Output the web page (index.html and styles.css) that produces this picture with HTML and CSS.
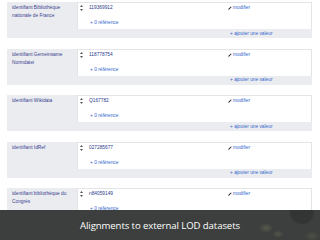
FILE: index.html
```html
<!DOCTYPE html>
<html lang="fr">
<head>
<meta charset="utf-8">
<link rel="stylesheet" href="styles.css">
</head>
<body>
<div class="page">
  <div class="group">
    <div class="prop">identifiant Bibliothèque nationale de France</div>
    <div class="stmts">
      <div class="stmt">
        <div class="main">
          <span class="rank"><svg viewBox="0 0 3 6" width="3" height="6"><path d="M1.5 0 L3 2 H0 Z M0 4 H3 L1.5 6 Z" fill="#555"/></svg></span>
          <span class="val">119369912</span>
          <span class="edit"><svg viewBox="0 0 6 6" width="4" height="4"><path d="M0.3 5.7 L0.8 4.2 L4.4 0.6 L5.4 1.6 L1.8 5.2 Z" fill="#222"/></svg>modifier</span>
        </div>
        <div class="ref">+ 0 référence</div>
      </div>
      <div class="add"><span></span><span>+ ajouter une valeur</span></div>
    </div>
  </div>
  <div class="group">
    <div class="prop">identifiant Gemeinsame Normdatei</div>
    <div class="stmts">
      <div class="stmt">
        <div class="main">
          <span class="rank"><svg viewBox="0 0 3 6" width="3" height="6"><path d="M1.5 0 L3 2 H0 Z M0 4 H3 L1.5 6 Z" fill="#555"/></svg></span>
          <span class="val">118778754</span>
          <span class="edit"><svg viewBox="0 0 6 6" width="4" height="4"><path d="M0.3 5.7 L0.8 4.2 L4.4 0.6 L5.4 1.6 L1.8 5.2 Z" fill="#222"/></svg>modifier</span>
        </div>
        <div class="ref">+ 0 référence</div>
      </div>
      <div class="add"><span></span><span>+ ajouter une valeur</span></div>
    </div>
  </div>
  <div class="group">
    <div class="prop">identifiant Wikidata</div>
    <div class="stmts">
      <div class="stmt">
        <div class="main">
          <span class="rank"><svg viewBox="0 0 3 6" width="3" height="6"><path d="M1.5 0 L3 2 H0 Z M0 4 H3 L1.5 6 Z" fill="#555"/></svg></span>
          <span class="val">Q167782</span>
          <span class="edit"><svg viewBox="0 0 6 6" width="4" height="4"><path d="M0.3 5.7 L0.8 4.2 L4.4 0.6 L5.4 1.6 L1.8 5.2 Z" fill="#222"/></svg>modifier</span>
        </div>
        <div class="ref">+ 0 référence</div>
      </div>
      <div class="add"><span></span><span>+ ajouter une valeur</span></div>
    </div>
  </div>
  <div class="group">
    <div class="prop">identifiant IdRef</div>
    <div class="stmts">
      <div class="stmt">
        <div class="main">
          <span class="rank"><svg viewBox="0 0 3 6" width="3" height="6"><path d="M1.5 0 L3 2 H0 Z M0 4 H3 L1.5 6 Z" fill="#555"/></svg></span>
          <span class="val">027285677</span>
          <span class="edit"><svg viewBox="0 0 6 6" width="4" height="4"><path d="M0.3 5.7 L0.8 4.2 L4.4 0.6 L5.4 1.6 L1.8 5.2 Z" fill="#222"/></svg>modifier</span>
        </div>
        <div class="ref">+ 0 référence</div>
      </div>
      <div class="add"><span></span><span>+ ajouter une valeur</span></div>
    </div>
  </div>
  <div class="group">
    <div class="prop">identifiant bibliothèque du Congrès</div>
    <div class="stmts">
      <div class="stmt">
        <div class="main">
          <span class="rank"><svg viewBox="0 0 3 6" width="3" height="6"><path d="M1.5 0 L3 2 H0 Z M0 4 H3 L1.5 6 Z" fill="#555"/></svg></span>
          <span class="val">n84059149</span>
          <span class="edit"><svg viewBox="0 0 6 6" width="4" height="4"><path d="M0.3 5.7 L0.8 4.2 L4.4 0.6 L5.4 1.6 L1.8 5.2 Z" fill="#222"/></svg>modifier</span>
        </div>
        <div class="ref">+ 0 référence</div>
      </div>
      <div class="add"></div>
    </div>
  </div>
</div>
<div class="caption">Alignments to external LOD datasets</div>
</body>
</html>
```
FILE: styles.css
```css
html, body {
  margin: 0;
  padding: 0;
  width: 320px;
  height: 240px;
  overflow: hidden;
  background: #fff;
  font-family: "Liberation Sans", Arial, sans-serif;
}
body { position: relative; }
.page {
  box-sizing: border-box;
  height: 210px;
  overflow: hidden;
  padding: 2px 8px 0 7px;
  display: flex;
  flex-direction: column;
  gap: 10.5px;
}
.group {
  display: flex;
  flex: none;
  height: 36px;
  font-size: 4.8px;
  line-height: 8px;
}
.prop {
  width: 70px;
  box-sizing: border-box;
  padding: 2px 10px 0 5px;
  background: #eaecf0;
  color: #3b3f8e;
}
.stmts {
  flex: 1;
  display: flex;
  flex-direction: column;
}
.stmt {
  height: 27px;
  box-sizing: border-box;
  background: #fff;
  border: 1px solid #e2e4e8;
  border-bottom: none;
  padding-top: 1px;
}
.main {
  display: grid;
  grid-template-columns: 9px 1fr 83px;
  align-items: center;
  padding-left: 2px;
}
.rank { display: flex; align-items: center; }
.val { color: #2a3a8c; }
.edit { color: #3366cc; display: flex; align-items: center; gap: 1px; }
.ref {
  color: #3366cc;
  padding: 7px 0 0 12px;
}
.add {
  flex: 1;
  background: #eaecf0;
  display: grid;
  grid-template-columns: 1fr 82px;
  align-items: center;
  color: #3366cc;
}
.caption {
  position: absolute;
  left: 0;
  right: 0;
  bottom: 0;
  height: 30px;
  display: flex;
  align-items: center;
  justify-content: center;
  color: #fff;
  font-family: "Open Sans", "Noto Sans", sans-serif;
  font-size: 9.6px;
  letter-spacing: -0.1px;
  background:
    radial-gradient(circle at 302px 2px, #323533 0, #323533 11px, transparent 13px),
    radial-gradient(ellipse 7px 5px at 266px 18px, #565b4d 0, transparent 100%),
    radial-gradient(ellipse 6px 4px at 278px 24px, #50564a 0, transparent 100%),
    radial-gradient(ellipse 8px 5px at 312px 26px, #4c5145 0, transparent 100%),
    #3c3f3d;
}
```
